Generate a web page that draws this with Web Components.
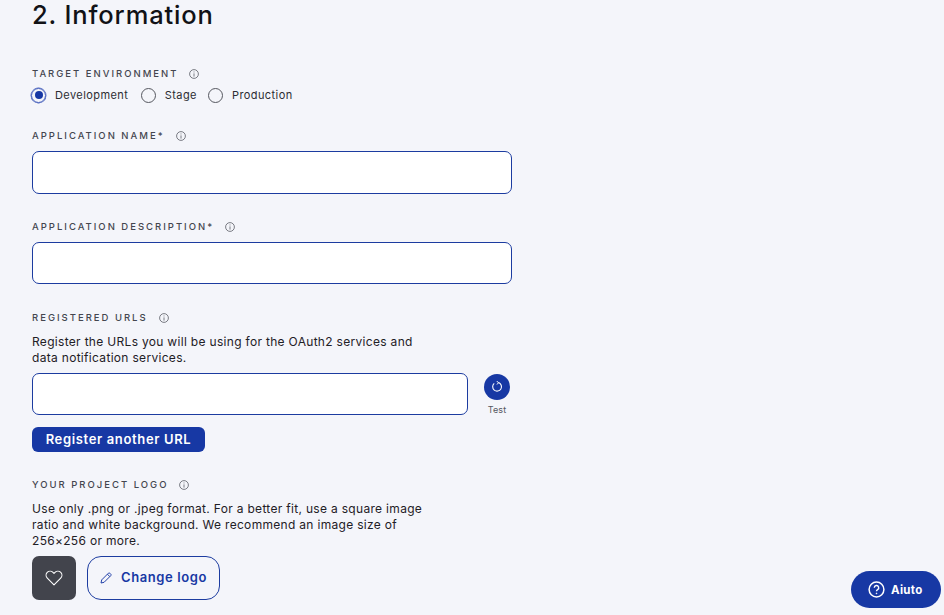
<!DOCTYPE html>
<html lang="en"><head><meta charset="utf-8"><title>Information</title>
<style>
html,body{margin:0;height:615px;overflow:hidden;background:#f4f5fa}
body{font-family:"Inter","Liberation Sans",sans-serif;color:#1c1d22}
</style></head><body>
<app-form>
  <h-title>2. Information</h-title>
  <form-field label="TARGET ENVIRONMENT" style="height:62px">
    <radio-group></radio-group>
  </form-field>
  <form-field label="APPLICATION NAME*" style="height:91px"><text-box></text-box></form-field>
  <form-field label="APPLICATION DESCRIPTION*" style="height:91px"><text-box style="height:42px"></text-box></form-field>
  <form-field label="REGISTERED URLS" style="height:167px">
    <help-text>Register the URLs you will be using for the OAuth2 services and<br>data notification services.</help-text>
    <url-row></url-row>
    <primary-button>Register another URL</primary-button>
  </form-field>
  <form-field label="YOUR PROJECT LOGO">
    <help-text>Use only .png or .jpeg format. For a better fit, use a square image<br>ratio and white background. We recommend an image size of<br>256×256 or more.</help-text>
    <logo-row></logo-row>
  </form-field>
</app-form>
<help-fab>Aiuto</help-fab>
<script>
function def(name, html){
  customElements.define(name, class extends HTMLElement{
    connectedCallback(){
      if(this.shadowRoot) return;
      const r=this.attachShadow({mode:'open'});
      r.innerHTML=typeof html==='function'?html(this):html;
    }
  });
}
def('app-form',`<style>:host{display:flex;flex-direction:column;padding:0 0 0 32px;width:480px}</style><slot></slot>`);
def('h-title',`<style>:host{display:block;height:68px;font-size:25.5px;line-height:29px;font-weight:500;color:#111216;letter-spacing:.85px}</style><slot></slot>`);
const info=`<svg width="10" height="10" viewBox="0 0 10 10" fill="none" stroke="#5b5d66" stroke-width=".8"><circle cx="5" cy="5" r="4.4"/><path d="M5 4.4V7.6M5 2.5V3.4"/></svg>`;
def('form-field',h=>`<style>
:host{display:block}
.l{display:flex;align-items:center;gap:11px;height:12px;font-size:9.5px;line-height:12px;font-weight:500;letter-spacing:2px;color:#44464f}
svg{flex:none}
</style><div class="l"><span>${h.getAttribute('label')}</span>${info}</div><slot></slot>`);
def('radio-group',`<style>
:host{display:flex;align-items:center;height:16px;margin:7px 0 0 -1px;font-size:11px;letter-spacing:.42px;color:#2c2d33}
.r{width:13px;height:13px;border:1.2px solid #55575f;border-radius:50%;flex:none;display:flex;align-items:center;justify-content:center}
.r.on{border-color:#3c57b8;box-shadow:0 0 0 .4px #3c57b8}
.r.on i{width:8px;height:8px;border-radius:50%;background:#1738a4;display:block}
span{margin:0 11px 0 9px}
span.d{margin-right:12.5px}
</style><div class="r on"><i></i></div><span class="d">Development</span><div class="r"></div><span>Stage</span><div class="r"></div><span>Production</span>`);
def('text-box',`<style>:host{display:block;box-sizing:border-box;height:43px;margin-top:9px;background:#fff;border:1px solid #1c3ca0;border-radius:7px}</style>`);
def('help-text',`<style>:host{display:block;margin-top:10px;font-size:12px;line-height:16px;color:#1f2026;letter-spacing:.31px}</style><slot></slot>`);
def('url-row',`<style>
:host{display:flex;margin-top:7px;height:54px}
.i{box-sizing:border-box;width:436px;height:42px;background:#fff;border:1px solid #1c3ca0;border-radius:7px}
.t{margin-left:16px;width:26px;display:flex;flex-direction:column;align-items:center;font-size:9px;letter-spacing:.1px;color:#55575f;margin-top:1px}
.c{width:26px;height:26px;border-radius:50%;background:#1738a4;display:flex;align-items:center;justify-content:center;margin-bottom:4px}
</style><div class="i"></div><div class="t"><div class="c"><svg width="12" height="12" viewBox="0 0 12 12" fill="none" stroke="#fff" stroke-width="1.1"><path d="M7.6 1.6A4.4 4.4 0 1 1 3.2 2.4"/><path d="M5.6 .2 7.7 1.6 6 3.5" stroke-width="1"/></svg></div><span>Test</span></div>`);
def('primary-button',`<style>:host{display:flex;align-items:center;justify-content:center;box-sizing:border-box;width:173px;height:25px;padding-bottom:1px;background:#1738a4;border-radius:6px;color:#fff;font-size:13px;font-weight:600;letter-spacing:.65px}</style><slot></slot>`);
def('logo-row',`<style>
:host{display:flex;gap:11px;margin-top:7px}
.b{width:44px;height:44px;border-radius:7px;background:#42444c;display:flex;align-items:center;justify-content:center}
.c{box-sizing:border-box;width:133px;height:44px;border:1px solid #1c3ca0;border-radius:14px;display:flex;align-items:center;padding-left:12px;gap:9px;color:#1738a4;font-size:13px;font-weight:600;letter-spacing:.6px}
.c span{margin-bottom:2px}
</style><div class="b"><svg width="18" height="16" viewBox="0 0 18 16" fill="none" stroke="#fff" stroke-width="1.1" stroke-linejoin="round"><path d="M9 14.8 2.3 8.2A4.2 4.2 0 0 1 2.2 2.4 4.2 4.2 0 0 1 8 2.3L9 3.3l1-1a4.2 4.2 0 0 1 5.8.1 4.2 4.2 0 0 1-.1 5.8Z"/></svg></div>
<div class="c"><svg width="12" height="12" viewBox="0 0 12 12" fill="none" stroke="#1738a4" stroke-width=".95" stroke-linejoin="round"><path d="M1 11 1.7 7.9 8.4 1.2a1 1 0 0 1 1.4 0l1 1a1 1 0 0 1 0 1.4L4.1 10.3Z"/><path d="M7.4 2.2 9.8 4.6"/></svg><span>Change logo</span></div>`);
def('help-fab',`<style>
:host{position:fixed;left:851px;top:571px;width:90px;height:37px;box-sizing:border-box;border-radius:19px;background:#1738a4;color:#fff;display:flex;align-items:center;padding-left:17px;gap:6px;font-size:11.5px;font-weight:700;letter-spacing:.3px}
</style><svg width="17" height="17" viewBox="0 0 17 17" fill="none" stroke="#fff" stroke-width="1.5"><circle cx="8.5" cy="8.5" r="7.4"/><path d="M6.3 6.7a2.2 2.2 0 1 1 3.3 1.9c-.7.4-1.1.8-1.1 1.6" stroke-width="1.4"/><circle cx="8.5" cy="12.4" r=".5" fill="#fff" stroke-width=".6"/></svg><slot></slot>`);
</script>
</body></html>
